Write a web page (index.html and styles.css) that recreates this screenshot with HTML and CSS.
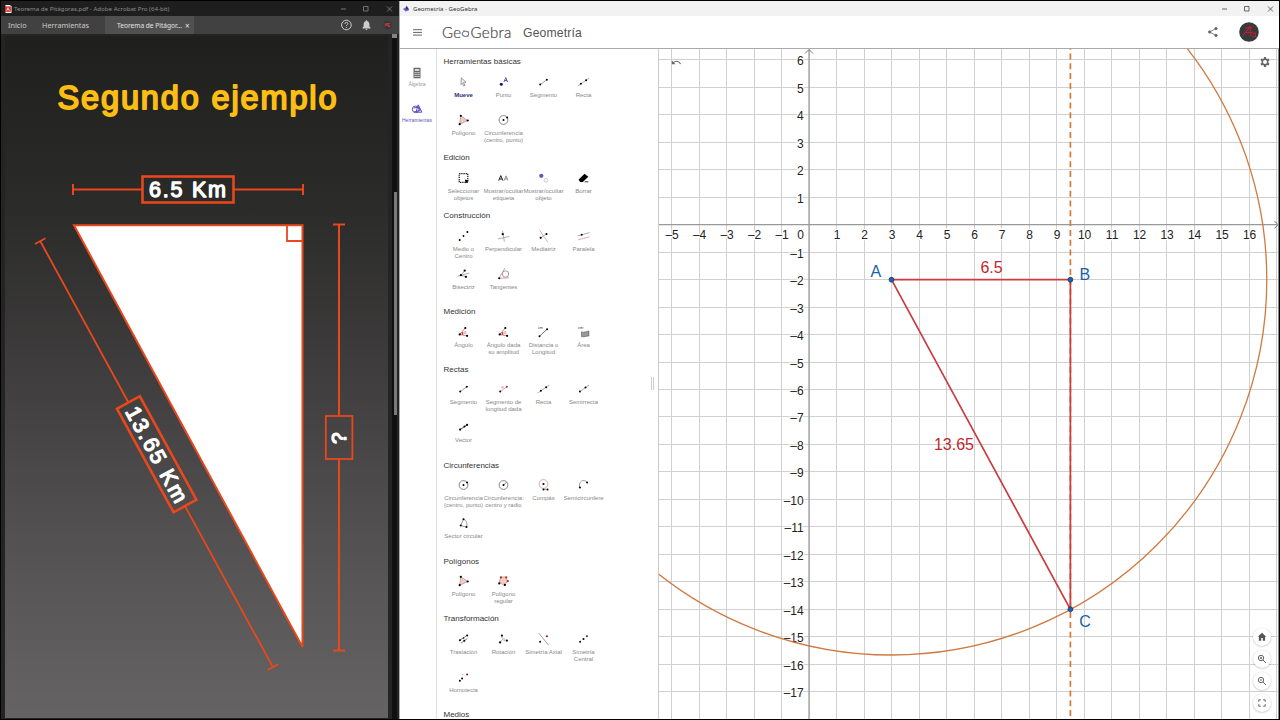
FILE: index.html
```
<!DOCTYPE html>
<html lang="es">
<head>
  <meta charset="utf-8">
  <title>Geometría - GeoGebra</title>
  <link rel="stylesheet" href="styles.css">
</head>
<body>
<svg class="sprites">
  <symbol id="i-move" viewBox="-8 -8 16 16"><path d="M-2.2-4.2l4.8 4.4-2.6.3 1.5 3-1.2.6-1.4-3-1.4 1.4z" fill="#f4efe6" stroke="#777" stroke-width=".7"/></symbol>
  <symbol id="i-point" viewBox="-8 -8 16 16"><circle cx="-2.2" cy="2.2" r="1.5" fill="#11117c"/><path d="M.4 0l1.9-4.4L4 0M1-1.4h2.6" fill="none" stroke="#4444b8" stroke-width=".9"/></symbol>
  <symbol id="i-segment" viewBox="-8 -8 16 16"><path d="M-3.3 2.6l6.6-4.8" stroke="#777" stroke-width=".7"/><circle cx="-3.3" cy="2.6" r="1" /><circle cx="3.3" cy="-2.2" r="1"/></symbol>
  <symbol id="i-line" viewBox="-8 -8 16 16"><path d="M-5.8 4L5.8-4" stroke="#888" stroke-width=".7"/><circle cx="-2.6" cy="1.7" r="1"/><circle cx="2.6" cy="-1.8" r="1"/></symbol>
  <symbol id="i-ray" viewBox="-8 -8 16 16"><path d="M-3.8 2.7L5.6-4" stroke="#888" stroke-width=".7"/><circle cx="-3.6" cy="2.6" r="1"/><circle cx="2" cy="-1.4" r="1"/></symbol>
  <symbol id="i-vector" viewBox="-8 -8 16 16"><path d="M-3.5 2.6l7-4.6" stroke="#333" stroke-width=".9"/><circle cx="-3.4" cy="2.6" r="1.1"/><circle cx="3.6" cy="-2.2" r="1.1"/><circle cx="1" cy="-.4" r="1"/></symbol>
  <symbol id="i-given" viewBox="-8 -8 16 16"><path d="M-3.3 2.6l6.6-4.8" stroke="#d58a90" stroke-width=".8"/><circle cx="-3.3" cy="2.6" r="1"/><circle cx="3.3" cy="-2.2" r="1" fill="#a22"/><path d="M-1.8-2.4h1.6v1.4h-1.6z" fill="none" stroke="#c99" stroke-width=".6"/></symbol>
  <symbol id="i-polygon" viewBox="-8 -8 16 16"><path d="M-2.7-4.2L4.2.5-3.8 4.2z" fill="#f1cdc8" stroke="#a88" stroke-width=".7"/><circle cx="-2.7" cy="-4.2" r="1.1"/><circle cx="4.2" cy=".5" r="1.1"/><circle cx="-3.8" cy="4.2" r="1.1"/></symbol>
  <symbol id="i-regular" viewBox="-8 -8 16 16"><path d="M-2.6-4h5.3L4.2.8 0 4.2-4.2.8z" fill="#f1cdc0" stroke="#c88" stroke-width=".7"/><g fill="#a33"><circle cx="-2.6" cy="-3.6" r="1.1"/><circle cx="2.7" cy="-3.6" r="1.1"/><circle cx="4.3" cy=".2" r="1.1"/></g><circle cx="-4.2" cy="2.4" r="1.1"/><circle cx="1.4" cy="3.9" r="1.1"/></symbol>
  <symbol id="i-circle" viewBox="-8 -8 16 16"><circle r="4.4" fill="none" stroke="#555" stroke-width=".7"/><circle r="1"/><circle cx="3.6" cy="-2.6" r="1"/></symbol>
  <symbol id="i-radius" viewBox="-8 -8 16 16"><circle r="4.4" fill="none" stroke="#555" stroke-width=".7"/><path d="M0 0l3.2-2.8" stroke="#555" stroke-width=".7"/><circle r="1"/></symbol>
  <symbol id="i-compass" viewBox="-8 -8 16 16"><circle cy="-1" r="4.4" fill="none" stroke="#c88" stroke-width=".7"/><circle cy="-1" r="1.1"/><path d="M0 4.4h4" stroke="#777" stroke-width=".6"/><circle cy="4.4" r="1"/><circle cx="4" cy="4.6" r="1"/></symbol>
  <symbol id="i-semi" viewBox="-8 -8 16 16"><path d="M-3.6 2.6c-2-6 3.6-9.4 7.4-5.2" fill="none" stroke="#777" stroke-width=".7"/><circle cx="-3.6" cy="2.6" r="1"/><circle cx="3.6" cy="-2.4" r="1"/></symbol>
  <symbol id="i-sector" viewBox="-8 -8 16 16"><path d="M-2.8 2.6L0-3.8C3-2.8 4-.4 3.2 4z" fill="#fff" stroke="#777" stroke-width=".7"/><circle cx="-2.8" cy="2.4" r="1"/><circle cy="-3.8" r="1"/><circle cx="3" cy="3.9" r="1"/></symbol>
  <symbol id="i-select" viewBox="-8 -8 16 16"><path d="M-4.3-4.3h8.6v8.6h-8.6z" fill="none" stroke="#000" stroke-width="1.2" stroke-dasharray="1.2 .95"/><path d="M1.4 1.4l3.8 1-3 3z"/></symbol>
  <symbol id="i-label" viewBox="-8 -8 16 16"><path d="M-4.8 2.6l2.1-5 2.1 5M-4 1h2.6" fill="none" stroke="#222" stroke-width="1"/><path d="M.6 2.6l1.9-4.8 2 4.8M1.4 1h2.4" fill="none" stroke="#777" stroke-width=".8"/></symbol>
  <symbol id="i-object" viewBox="-8 -8 16 16"><circle cx="-2.2" cy="-2.2" r="2.1" fill="#5a55cf"/><circle cx="2.4" cy="2.4" r="1.8" fill="#fff" stroke="#aaa" stroke-width=".6"/></symbol>
  <symbol id="i-erase" viewBox="-8 -8 16 16"><path d="M-5 1.7L1-4.2 4.8-1.2-.7 4h-2.6z"/><path d="M1.2 3.8h3.6" stroke="#000" stroke-width=".8"/></symbol>
  <symbol id="i-mid" viewBox="-8 -8 16 16"><circle cx="-3.8" cy="3.9" r="1"/><circle r=".9"/><circle cx="3.9" cy="-3.9" r="1"/></symbol>
  <symbol id="i-perp" viewBox="-8 -8 16 16"><path d="M-5.4 2.9L5.8.5" stroke="#888" stroke-width=".7"/><path d="M-1-5L.9 5.6" stroke="#b88" stroke-width=".8"/><circle cx="-.8" cy="-1.8" r="1.1"/></symbol>
  <symbol id="i-bisector" viewBox="-8 -8 16 16"><path d="M-4-6L4.4 6.4" stroke="#d99" stroke-width=".8"/><path d="M-2.8 1.8l5.8-3.8" stroke="#777" stroke-width=".6"/><circle cx="-2.8" cy="1.8" r="1.1"/><circle cx="3" cy="-2" r="1.1"/></symbol>
  <symbol id="i-parallel" viewBox="-8 -8 16 16"><path d="M-6 0L6-3.4" stroke="#888" stroke-width=".7"/><path d="M-5.4 3.8L6 .8" stroke="#c99" stroke-width=".8"/><circle cx="-1.8" cy="-1.2" r="1"/></symbol>
  <symbol id="i-angbis" viewBox="-8 -8 16 16"><path d="M-2.6 1.2L1.4-3.6M-2.6 1.2l5.8 1.8" stroke="#777" stroke-width=".7"/><path d="M-6 2.2L5.8-1" stroke="#c99" stroke-width=".9"/><circle cx="-2.6" cy="1.2" r="1.1"/><circle cx="1.2" cy="-3.4" r="1.1"/><circle cx="2.4" cy="2.8" r="1.1"/></symbol>
  <symbol id="i-tangent" viewBox="-8 -8 16 16"><circle cx="2" cy="0" r="3.2" fill="none" stroke="#777" stroke-width=".7"/><path d="M-5.2 5.2L1.5-6M-5.6 4.4l11-.6" stroke="#c88" stroke-width=".8"/><circle cx="-4.2" cy="4.2" r="1"/></symbol>
  <symbol id="i-angle" viewBox="-8 -8 16 16"><path d="M1.8-4L-3.8 2.4 3.8 4" fill="none" stroke="#b66" stroke-width=".8"/><path d="M-1 0v2.9" stroke="#d33" stroke-width="1.5"/><path d="M1.2-.4h1.2v2H1.2z" fill="none" stroke="#d77" stroke-width=".6"/><circle cx="1.8" cy="-4" r="1.1"/><circle cx="-3.8" cy="2.4" r="1.1"/><circle cx="3.6" cy="3.8" r="1.1"/></symbol>
  <symbol id="i-distance" viewBox="-8 -8 16 16"><path d="M-4 4.2l7.6-7" stroke="#333" stroke-width=".7"/><circle cx="-4" cy="4.2" r="1"/><circle cx="3.6" cy="-2.8" r="1"/></symbol>
  <symbol id="i-area" viewBox="-8 -8 16 16"><path d="M-2-.2c3 1.4 5-.6 7.400-.8v5c-3-.2-4 1.400-7.400.6z" fill="#999" stroke="#555" stroke-width=".6"/></symbol>
  <symbol id="i-translate" viewBox="-8 -8 16 16"><path d="M-3.8 1.2L2.8-3M-2.4 4L4-.6" stroke="#666" stroke-width=".8"/><circle cx="-3.6" cy="1.2" r="1"/><circle cx="3.6" cy="-3.6" r="1"/><circle cx=".8" cy="1.8" r="1"/><circle cx="0" cy="-1" r=".8"/></symbol>
  <symbol id="i-rotate" viewBox="-8 -8 16 16"><path d="M-1.6-3.6l.4 3.4M-3.4 3.6L-.8.2l2.2 2.2M-.2-.4c1.8 0 2 1 1.4 2.6" fill="none" stroke="#999" stroke-width=".7"/><circle cx="-1.6" cy="-3.4" r="1.1"/><circle cx="-3.4" cy="3.4" r="1.1"/><circle cx="3.4" cy="1.6" r="1.1"/></symbol>
  <symbol id="i-reflect" viewBox="-8 -8 16 16"><path d="M-5-6L5 6" stroke="#777" stroke-width=".7"/><circle cx="-3.4" cy="2.8" r="1"/><circle cx="3.4" cy="-2.8" r="1" fill="#811"/></symbol>
  <symbol id="i-central" viewBox="-8 -8 16 16"><circle cx="-3.4" cy="2.8" r="1"/><circle r="1"/><circle cx="3.4" cy="-2.8" r="1" fill="#613"/></symbol>
  <symbol id="i-dilate" viewBox="-8 -8 16 16"><circle cx="-3.6" cy="3.8" r="1"/><circle cx="-1.4" cy="1.6" r="1"/><circle cx="-.8" cy="-2.4" r=".6" fill="#888"/><circle cx="3.6" cy="-2.6" r="1" fill="#811"/></symbol>
</svg>

<div class="desktop">
  <section class="acrobat">
    <div class="titlebar dark">
      <svg class="pdf" viewBox="0 0 7 8"><path d="M.5 0H5l1.5 1.6V8h-6z" fill="#fff"/><path d="M0 1.4h5.8v5.4H0z" fill="#d9261f"/><path d="M1.4 5.6l1.5-3 1.5 3M2 4.7h1.8" fill="none" stroke="#fff" stroke-width=".7"/></svg>
      <span class="caption">Teorema de Pitágoras.pdf - Adobe Acrobat Pro (64-bit)</span>
      <svg class="winbuttons" viewBox="0 0 54 8"><path d="M2 4h5M24.500 1.500h4.500v4.500h-4.500zM48 1.500l5 5M53 1.500l-5 5"/></svg>
    </div>
    <nav class="tabs">
      <span class="tab-inicio">Inicio</span>
      <span class="tab-herr">Herramientas</span>
      <span class="tab-open"><span>Teorema de Pitágor...</span><b>×</b></span>
      <svg class="tab-icons" viewBox="0 0 54 12">
        <circle cx="6.400" cy="6" r="4.800"/><path d="M4.900 4.900c0-2.200 3-2 3-.2 0 1-1.500 1.100-1.500 2.200M6.400 8v1"/>
        <path d="M22.600 9.400v-.8l1-1V4.900q.2-2.400 2.300-2.900v-.8h1.200V2q2.100.5 2.300 2.900v2.700l1 1v.8zM25.500 9.900h2q-.2 1-1 1t-1-1" class="solid"/>
        <circle cx="47.500" cy="6" r="4.200" class="user"/><path d="M44.300 5.200l6-1M44.800 7.500l2.700-3.500.5 3.500h2.500M45 6.200h5" class="scribble"/>
      </svg>
    </nav>
    <div class="viewer">
      <svg class="slide" viewBox="5 36 383 682">
        <text x="57.500" y="109" class="heading" textLength="279">Segundo ejemplo</text>
        <path d="M74 225.300H302.500V647z" class="triangle"/>
        <path d="M287 225.500v15.500h15.500" class="dim thin"/>
        <path d="M73 189.500h69M234 189.500h69M73 184v11M303 184v11" class="dim"/>
        <rect x="142.500" y="176.500" width="91" height="26" class="box"/>
        <text x="149" y="196.800" class="km" textLength="77">6.5 Km</text>
        <path d="M339 224.500V416M339 459v191.500M333 224.500h12M333 650.500h12" class="dim"/>
        <rect x="325.800" y="416" width="26.600" height="43" class="box thin"/>
        <text transform="translate(346 444) rotate(-90)" class="km question">?</text>
        <g transform="translate(156.700 454.300) rotate(61.350)">
          <path d="M-243 0H-59M59 0H242.500M-243-6V6M242.500-6V6" class="dim thin"/>
          <rect x="-59" y="-13" width="118" height="26" class="box"/>
          <text x="-53" y="7.500" class="km" textLength="106">13.65 Km</text>
        </g>
      </svg>
      <div class="scroll"><i class="scroll-top"></i><i class="thumb"></i></div>
    </div>
  </section>

  <section class="geogebra">
    <div class="titlebar light">
      <svg class="ggb" viewBox="0 0 8 8"><path d="M0 4.500L4 2l3 4-4 1.500z" fill="#6c67c9"/><path d="M4 .5l3 4.500H3z" fill="#39357f"/></svg>
      <span class="caption">Geometría - GeoGebra</span>
      <svg class="winbuttons" viewBox="0 0 54 8"><path d="M2 4h5M24.500 1.500h4.500v4.500h-4.500zM48 1.500l5 5M53 1.500l-5 5"/></svg>
    </div>
    <header>
      <svg class="burger" viewBox="0 0 9 7"><path d="M0 .7h9M0 3.400h9M0 6.100h9"/></svg>
      <span class="logo">Ge<svg viewBox="0 0 9 9"><ellipse cx="4.500" cy="4.800" rx="3.300" ry="2.700"/><circle cx="1.500" cy="6" r=".8"/><circle cx="3" cy="2" r=".8"/><circle cx="7.200" cy="3" r=".8"/><circle cx="6.800" cy="7" r=".8"/></svg>Gebra</span>
      <span class="app">Geometría</span>
      <svg class="share" viewBox="0 0 10 10"><path d="M8 1.500L1.500 5 8 8.500"/><circle cx="8" cy="1.600" r="1.200"/><circle cx="1.700" cy="5" r="1.200"/><circle cx="8" cy="8.400" r="1.200"/></svg>
      <svg class="avatar" viewBox="0 0 20 20"><circle cx="10" cy="10" r="9.800" fill="#383b3b"/><path d="M3.500 14L11 5l.8 9M6 10.500h7.500M6.500 6.500q4-2 7-1M14 11h2.500v3.500H13" fill="none" stroke="#c31c34" stroke-width="1.100"/></svg>
    </header>
    <div class="main">
      <aside class="rail">
        <div class="rail-item">
          <svg viewBox="0 0 12 12"><path d="M2.500.8h7v10.400h-7zM3.700 2.200v1.600h4.600V2.200z" fill="#666" fill-rule="evenodd"/><path d="M3.500 5.700h1.200M5.400 5.700h1.200M7.300 5.700h1.200M3.500 7.600h1.200M5.400 7.600h1.200M7.300 7.600h1.200M3.500 9.500h1.200M5.400 9.500h1.200M7.300 9.500h1.200" stroke="#fff" stroke-width="1"/></svg>
          <span>Álgebra</span>
        </div>
        <div class="rail-item active">
          <svg viewBox="0 0 12 12" fill="none" stroke="#5a50bd"><circle cx="4.600" cy="6.300" r="3.300"/><path d="M7.200 1.800l3.600 7.400H5zM2.500 5l6-1 .5 3.500-6 1.500"/></svg>
          <span>Herramientas</span>
        </div>
      </aside>
      <div class="tools">
        <h2>Herramientas básicas</h2>
        <div class="group">
          <div class="tool selected"><svg><use href="#i-move"/></svg><span>Mueve</span></div>
          <div class="tool"><svg><use href="#i-point"/></svg><span>Punto</span></div>
          <div class="tool"><svg><use href="#i-segment"/></svg><span>Segmento</span></div>
          <div class="tool"><svg><use href="#i-line"/></svg><span>Recta</span></div>
          <div class="tool"><svg><use href="#i-polygon"/></svg><span>Polígono</span></div>
          <div class="tool"><svg><use href="#i-circle"/></svg><span>Circunferencia<br>(centro, punto)</span></div>
        </div>
        <h2>Edición</h2>
        <div class="group">
          <div class="tool"><svg><use href="#i-select"/></svg><span>Seleccionar<br>objetos</span></div>
          <div class="tool"><svg><use href="#i-label"/></svg><span>Mostrar/ocultar<br>etiqueta</span></div>
          <div class="tool"><svg><use href="#i-object"/></svg><span>Mostrar/ocultar<br>objeto</span></div>
          <div class="tool"><svg><use href="#i-erase"/></svg><span>Borrar</span></div>
        </div>
        <h2>Construcción</h2>
        <div class="group">
          <div class="tool"><svg><use href="#i-mid"/></svg><span>Medio o<br>Centro</span></div>
          <div class="tool"><svg><use href="#i-perp"/></svg><span>Perpendicular</span></div>
          <div class="tool"><svg><use href="#i-bisector"/></svg><span>Mediatriz</span></div>
          <div class="tool"><svg><use href="#i-parallel"/></svg><span>Paralela</span></div>
          <div class="tool"><svg><use href="#i-angbis"/></svg><span>Bisectriz</span></div>
          <div class="tool"><svg><use href="#i-tangent"/></svg><span>Tangentes</span></div>
        </div>
        <h2>Medición</h2>
        <div class="group">
          <div class="tool"><svg><use href="#i-angle"/></svg><span>Ángulo</span></div>
          <div class="tool"><svg><use href="#i-angle"/></svg><span>Ángulo dada<br>su amplitud</span></div>
          <div class="tool"><svg><use href="#i-distance"/><text x="3" y="5" class="unit">cm</text></svg><span>Distancia o<br>Longitud</span></div>
          <div class="tool"><svg><use href="#i-area"/><text x="3" y="5" class="unit">cm²</text></svg><span>Área</span></div>
        </div>
        <h2>Rectas</h2>
        <div class="group">
          <div class="tool"><svg><use href="#i-segment"/></svg><span>Segmento</span></div>
          <div class="tool"><svg><use href="#i-given"/></svg><span>Segmento de<br>longitud dada</span></div>
          <div class="tool"><svg><use href="#i-line"/></svg><span>Recta</span></div>
          <div class="tool"><svg><use href="#i-ray"/></svg><span>Semirrecta</span></div>
          <div class="tool"><svg><use href="#i-vector"/></svg><span>Vector</span></div>
        </div>
        <h2>Circunferencias</h2>
        <div class="group">
          <div class="tool"><svg><use href="#i-circle"/></svg><span>Circunferencia<br>(centro, punto)</span></div>
          <div class="tool"><svg><use href="#i-radius"/></svg><span>Circunferencia:<br>centro y radio</span></div>
          <div class="tool"><svg><use href="#i-compass"/></svg><span>Compás</span></div>
          <div class="tool"><svg><use href="#i-semi"/></svg><span>Semicircunfere</span></div>
          <div class="tool"><svg><use href="#i-sector"/></svg><span>Sector circular</span></div>
        </div>
        <h2>Polígonos</h2>
        <div class="group">
          <div class="tool"><svg><use href="#i-polygon"/></svg><span>Polígono</span></div>
          <div class="tool"><svg><use href="#i-regular"/></svg><span>Polígono<br>regular</span></div>
        </div>
        <h2>Transformación</h2>
        <div class="group">
          <div class="tool"><svg><use href="#i-translate"/></svg><span>Traslación</span></div>
          <div class="tool"><svg><use href="#i-rotate"/></svg><span>Rotación</span></div>
          <div class="tool"><svg><use href="#i-reflect"/></svg><span>Simetría Axial</span></div>
          <div class="tool"><svg><use href="#i-central"/></svg><span>Simetría<br>Central</span></div>
          <div class="tool"><svg><use href="#i-dilate"/></svg><span>Homotecia</span></div>
        </div>
        <h2>Medios</h2>
      </div>
      <div class="graphics">
        <svg id="plot" viewBox="659 49 619 670">
          <g id="grid"></g>
          <path d="M809 50V719M659 224.700H1277" class="axis"/>
          <path d="M805 53.500l4-4 4 4M1274.500 221l3.500 3.700-3.500 3.700" class="arrow"/>
          <g id="labels"></g>
          <circle cx="891.500" cy="279.700" r="375.300" class="curve"/>
          <path d="M1070.400 43.700V719" class="perp"/>
          <path d="M1070.400 279.700H891.500L1070.400 609.400z" class="seg"/>
          <g class="pt"><circle cx="891.500" cy="279.700" r="2.400"/><circle cx="1070.400" cy="279.700" r="2.400"/><circle cx="1070.400" cy="609.300" r="2.400"/></g>
          <g class="name"><text x="870.500" y="276.500">A</text><text x="1079.500" y="279.500">B</text><text x="1079.300" y="626.500">C</text></g>
          <g class="length"><text x="991.500" y="272.800">6.5</text><text x="954" y="450.200">13.65</text></g>
          <path d="M671.800 60.600v3.600h3.800z" class="undo-head"/>
          <path d="M673 62.800q4.500-3.600 7.600 1.200" class="undo"/>
        </svg>
        <svg class="gear" viewBox="0 0 24 24"><path fill-rule="evenodd" d="M10 2h4l.5 2.800 1.900 1.100 2.700-1 2 3.400-2.200 1.900v3.600l2.200 1.900-2 3.400-2.700-1-1.900 1.100L14 22h-4l-.5-2.800-1.900-1.100-2.700 1-2-3.400 2.200-1.900v-3.600L2.900 8.300l2-3.400 2.700 1 1.900-1.100zM12 8a4 4 0 100 8 4 4 0 000-8z"/></svg>
        <div class="zoombar">
          <button><svg viewBox="0 0 10 10"><path d="M5 .8L.8 4.800h1.100v4h2.300V6h1.600v2.800h2.300v-4h1.100z" class="fill"/></svg></button>
          <button><svg viewBox="0 0 10 10"><circle cx="4" cy="4" r="2.700"/><path d="M6 6l3 3M2.800 4h2.400M4 2.800v2.400"/></svg></button>
          <button><svg viewBox="0 0 10 10"><circle cx="4" cy="4" r="2.700"/><path d="M6 6l3 3M2.800 4h2.400"/></svg></button>
          <button><svg viewBox="0 0 10 10"><path d="M1.800 3.800v-2h2M6.200 1.800h2v2M8.200 6.200v2h-2M3.800 8.200h-2v-2"/></svg></button>
        </div>
      </div>
      <i class="splitter"></i>
    </div>
  </section>
</div>
<script src="plot.js"></script>
</body>
</html>
```
FILE: styles.css
```
html, body {
  height: 100%;
  margin: 0;
}

body {
  background: #000;
  font-family: "Liberation Sans", Arial, sans-serif;
  overflow: hidden;
}

.sprites {
  position: absolute;
  width: 0;
  height: 0;
}

.unit {
  font-size: 3.6px;
  fill: #333;
}

.desktop {
  display: flex;
  box-sizing: border-box;
  width: 1280px;
  height: 720px;
  padding: 1px;
}

svg {
  display: block;
}

.titlebar {
  display: flex;
  align-items: center;
  height: 15px;
  flex: none;
  font-family: "Noto Sans", sans-serif;
  font-size: 6.5px;
}

.titlebar .caption {
  flex: 1;
  white-space: nowrap;
}

.winbuttons {
  width: 54px;
  height: 8px;
  fill: none;
  stroke-width: .8;
}

/* Acrobat window */
.acrobat {
  display: flex;
  flex-direction: column;
  width: 398px;
  background: #222;
}

.titlebar.dark {
  box-sizing: border-box;
  padding: 0 6px 0 4px;
  color: #8c8c8c;
  background: #1e1e1e;
  font-size: 6.15px;
}

.dark .winbuttons {
  stroke: #888;
}

.pdf {
  width: 7px;
  height: 8px;
  margin-right: 2px;
}

.tabs {
  display: flex;
  align-items: center;
  height: 18px;
  flex: none;
  background: #414141;
  color: #ccc;
  font-family: "Noto Sans", sans-serif;
  font-size: 7.3px;
  white-space: nowrap;
}

.tab-inicio {
  width: 34px;
  padding-left: 7px;
}

.tab-herr {
  width: 63px;
}

.tab-open {
  display: flex;
  align-items: center;
  box-sizing: border-box;
  height: 100%;
  width: 89px;
  padding-left: 12px;
  color: #e4e4e4;
  background: #505050;
  font-size: 6.6px;
}

.tab-open b {
  margin-left: 3px;
  font-size: 8px;
  font-weight: normal;
}

.tab-icons {
  width: 54px;
  height: 12px;
  margin-left: 146px;
  fill: none;
  stroke: #ccc;
  stroke-width: 1;
}

.tab-icons .solid {
  fill: #ccc;
  stroke: none;
}

.tab-icons .user {
  fill: #383434;
  stroke: none;
}

.tab-icons .scribble {
  stroke: #b63a47;
}

.viewer {
  display: flex;
  flex: 1;
  padding: 2px 0 1px 4px;
  background: #242424;
}

.slide {
  width: 383px;
  height: 682px;
  background: linear-gradient(#1f1f1e, #2b2b2a 25%, #413f3f 52%, #555353 77%, #656363);
}

/* a round-joined stroke on the regular weight gives the letters soft ends */
.heading {
  font-size: 32.5px;
  fill: #fdbe14;
  stroke: #fdbe14;
  stroke-width: 1.8;
  stroke-linejoin: round;
}

.km {
  font-size: 21.5px;
  fill: #fff;
  stroke: #fff;
  stroke-width: 1.3;
  stroke-linejoin: round;
}

.question {
  font-size: 21px;
}

.triangle {
  fill: #fff;
  stroke: #e8481c;
  stroke-width: 2;
}

.dim {
  fill: none;
  stroke: #e8481c;
  stroke-width: 2;
}

.box {
  fill: none;
  stroke: #e8481c;
  stroke-width: 2.6;
}

.thin {
  stroke-width: 1.8;
}

.scroll {
  display: flex;
  flex-direction: column;
  align-items: flex-end;
  width: 5px;
  margin: -2px 1px -1px 4px;
  background: #101010;
}

.scroll-top {
  width: 5px;
  height: 4px;
  background: #858585;
}

.thumb {
  width: 3px;
  height: 223px;
  margin-top: 154px;
  background: #7b7b7b;
}

/* GeoGebra window */
.geogebra {
  display: flex;
  flex-direction: column;
  flex: 1;
  min-width: 0;
  background: #fff;
  border-left: 1px solid #aaa;
}

.titlebar.light {
  box-sizing: border-box;
  padding: 0 5px 0 3px;
  color: #333;
  background: #f2f2f2;
  font-size: 6.1px;
}

.light .winbuttons {
  stroke: #444;
}

.ggb {
  width: 7px;
  height: 7px;
  margin-right: 3px;
}

header {
  display: flex;
  align-items: center;
  height: 32px;
  flex: none;
  padding: 0 20px 0 13px;
  border-bottom: 1px solid #aaa;
}

.burger {
  width: 9px;
  height: 7px;
  margin-right: 20px;
  stroke: #666;
  stroke-width: 1;
}

.logo {
  display: flex;
  align-items: center;
  width: 81px;
  font-family: Lato, sans-serif;
  font-weight: 300;
  font-size: 15px;
  letter-spacing: .35px;
  color: #444;
  -webkit-text-stroke: .2px #444;
}

.logo svg {
  width: 9px;
  height: 9px;
  margin-top: 3px;
  fill: none;
  stroke: #555;
  stroke-width: .9;
}

.logo circle {
  fill: #7774c8;
  stroke: none;
}

.app {
  flex: 1;
  padding-top: 1px;
  font-size: 12.2px;
  letter-spacing: .15px;
  color: #555;
}

.share {
  width: 10px;
  height: 10px;
  margin-right: 21px;
  fill: #666;
  stroke: #666;
  stroke-width: .8;
}

.share path {
  fill: none;
}

.avatar {
  width: 20px;
  height: 20px;
}

.main {
  display: flex;
  flex: 1;
  min-height: 0;
  position: relative;
}

.rail {
  width: 37px;
  flex: none;
  box-sizing: border-box;
  padding-top: 18px;
  border-right: 1px solid #e0e0e0;
}

.rail-item {
  display: flex;
  flex-direction: column;
  align-items: center;
  height: 36px;
  margin-right: 2px;
  font-size: 5px;
  line-height: 7px;
  color: #999;
}

.rail-item svg {
  width: 12px;
  height: 12px;
  margin-bottom: 2px;
}

.rail-item.active {
  color: #6057c0;
}

.tools {
  width: 222px;
  flex: none;
  box-sizing: border-box;
  padding: 3.2px 0 0 6.5px;
  overflow: hidden;
  border-right: 1px solid #ccc;
}

.tools h2 {
  height: 19.6px;
  margin: 0;
  line-height: 19.6px;
  font-size: 8px;
  font-weight: normal;
  color: #333;
}

.group {
  display: grid;
  grid-template-columns: repeat(4, 40px);
  grid-auto-rows: 38.2px;
}

.tool {
  text-align: center;
  font-size: 6px;
  line-height: 7px;
  color: #888;
}

.tool svg {
  width: 17px;
  height: 16px;
  margin: 2px auto 2px;
}

.tool span {
  display: block;
  overflow: hidden;
  white-space: nowrap;
}

.tool.selected {
  color: #302f7c;
  font-weight: bold;
}

.graphics {
  flex: 1;
  position: relative;
  border-right: 1px solid #888;
}

#plot {
  width: 619px;
  height: 670px;
}

#grid {
  stroke: #d0d0d0;
  stroke-width: 1;
}

.axis, .arrow {
  fill: none;
  stroke: #999;
  stroke-width: 1.2;
}

.arrow {
  stroke: #666;
  stroke-width: .9;
}

#labels {
  font-size: 12px;
  fill: #222;
  stroke: #fff;
  stroke-width: 2.5;
  paint-order: stroke;
}

.curve {
  fill: none;
  stroke: #cf7a40;
  stroke-width: 1.3;
}

.perp {
  stroke: #d5793a;
  stroke-width: 1.7;
  stroke-dasharray: 6 3.8;
}

.seg {
  fill: none;
  stroke: #c93c40;
  stroke-width: 1.7;
}

.pt {
  fill: #1565c0;
  stroke: #152f50;
  stroke-width: .8;
}

.name, .length {
  font-size: 16px;
}

.name {
  fill: #1a5fa8;
}

.length {
  fill: #bf282d;
  text-anchor: middle;
}

.undo {
  fill: none;
  stroke: #666;
  stroke-width: 1.1;
}

.undo-head {
  fill: #666;
}

.gear {
  position: absolute;
  top: 7px;
  right: 7px;
  width: 12px;
  height: 12px;
  fill: #666;
}

.zoombar {
  position: absolute;
  right: 7px;
  bottom: 7px;
  display: flex;
  flex-direction: column;
  gap: 4px;
}

.zoombar button {
  display: flex;
  align-items: center;
  justify-content: center;
  width: 18px;
  height: 18px;
  padding: 0;
  border: 0;
  border-radius: 50%;
  background: #fff;
  box-shadow: 0 .5px 2px rgba(0, 0, 0, .3);
}

.zoombar svg {
  width: 10px;
  height: 10px;
  fill: none;
  stroke: #555;
  stroke-width: .9;
}

.zoombar .fill {
  fill: #555;
  stroke: none;
}

.splitter {
  position: absolute;
  left: 251px;
  top: 328px;
  width: 1px;
  height: 13px;
  border: solid #ccc;
  border-width: 0 1px;
}
```
FILE: plot.js
```
var NS = 'http://www.w3.org/2000/svg';
var grid = document.getElementById('grid');
var labels = document.getElementById('labels');
var x0 = 809, y0 = 224.7, unit = 27.5;

function add(parent, tag, attrs, text) {
  var el = document.createElementNS(NS, tag);
  for (var k in attrs) el.setAttribute(k, attrs[k]);
  if (text !== undefined) el.textContent = text;
  parent.appendChild(el);
}

function fmt(n) {
  return n < 0 ? '–' + -n : n;
}

for (var i = -5; i <= 17; i++) {
  var x = Math.floor(x0 + i * unit) + .5;
  add(grid, 'line', {x1: x, x2: x, y1: 49, y2: 719});
  if (i !== 0 && i < 17) {
    add(labels, 'text', {x: x0 + i * unit + .6, y: 238.8, 'text-anchor': 'middle'}, fmt(i));
  }
}
add(labels, 'text', {x: 804, y: 238.8, 'text-anchor': 'end'}, '0');

for (var j = -17; j <= 6; j++) {
  var y = Math.floor(y0 - j * 27.47) + .5;
  add(grid, 'line', {x1: 659, x2: 1278, y1: y, y2: y});
  if (j !== 0) {
    add(labels, 'text', {x: 803.7, y: y0 - j * 27.47 + 5.5, 'text-anchor': 'end'}, fmt(j));
  }
}
```
